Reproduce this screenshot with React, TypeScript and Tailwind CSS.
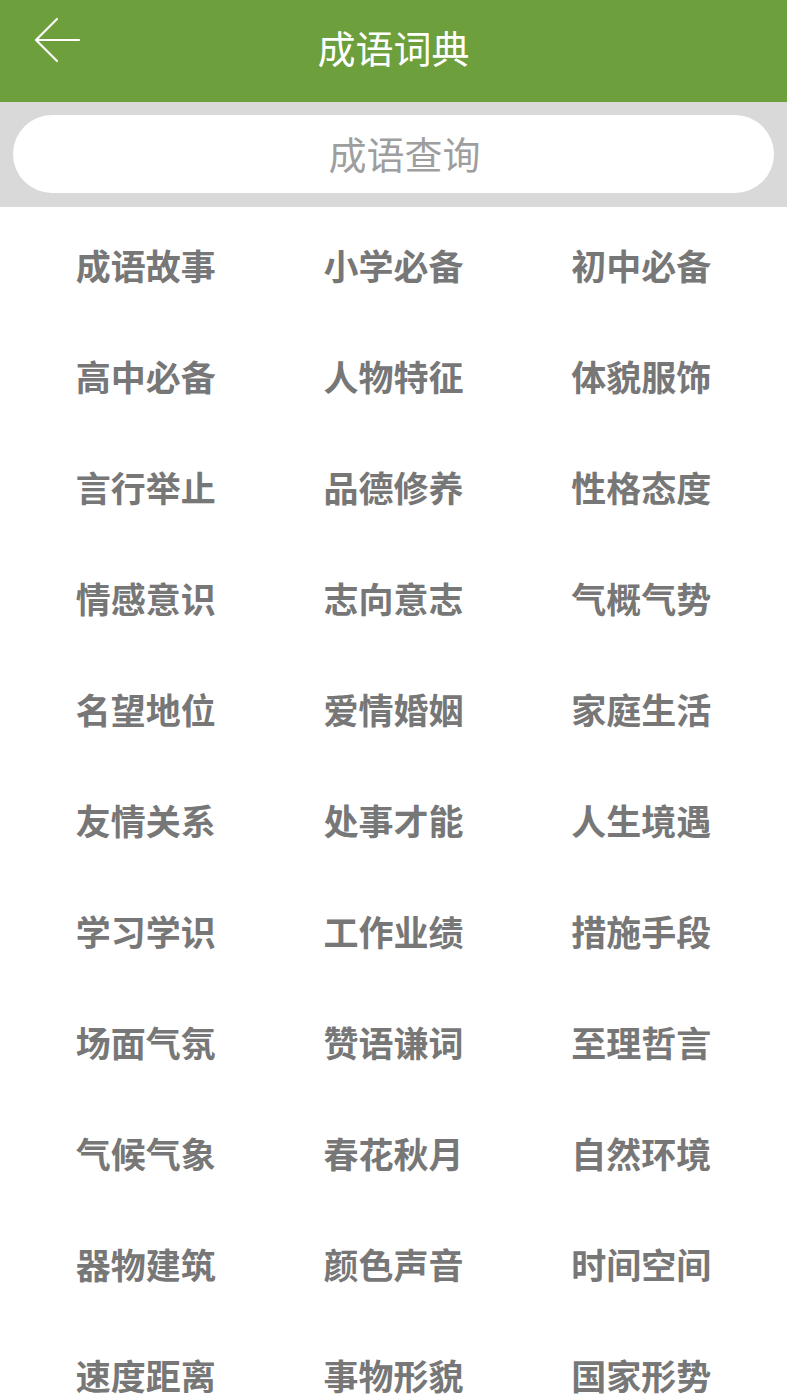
import React from "react";

const items = [
  "成语故事", "小学必备", "初中必备",
  "高中必备", "人物特征", "体貌服饰",
  "言行举止", "品德修养", "性格态度",
  "情感意识", "志向意志", "气概气势",
  "名望地位", "爱情婚姻", "家庭生活",
  "友情关系", "处事才能", "人生境遇",
  "学习学识", "工作业绩", "措施手段",
  "场面气氛", "赞语谦词", "至理哲言",
  "气候气象", "春花秋月", "自然环境",
  "器物建筑", "颜色声音", "时间空间",
  "速度距离", "事物形貌", "国家形势",
];

export default function App() {
  return (
    <div
      className="w-[787px] h-[1400px] overflow-hidden bg-white"
      style={{ fontFamily: '"Noto Sans CJK SC", "Noto Sans", sans-serif' }}
    >
      <header className="relative h-[102px] bg-[#6e9f3d] flex items-center justify-center">
        <svg
          className="absolute left-[33px] top-[16px]"
          width="48"
          height="48"
          viewBox="0 0 48 48"
          fill="none"
          stroke="white"
          strokeWidth="2.2"
          strokeLinecap="round"
          strokeLinejoin="round"
        >
          <path d="M3 24 H46" />
          <path d="M24 3 L3 24 L24 45" />
        </svg>
        <h1 className="text-white text-[38px] leading-none font-normal -mt-[8px]">成语词典</h1>
      </header>
      <div className="bg-[#d9d9d9] h-[105px] px-[13px] pt-[13px]">
        <div className="h-[78px] rounded-full bg-white flex items-center justify-center">
          <span className="text-[#9e9e9e] text-[38px] leading-none ml-[22px] -mt-[2px]">成语查询</span>
        </div>
      </div>
      <div className="grid grid-cols-3 px-[22px] pt-[2px]">
        {items.map((t) => (
          <div key={t} className="h-[111px] flex items-center justify-center">
            <span className="text-[#777777] text-[35px] font-bold leading-none">{t}</span>
          </div>
        ))}
      </div>
    </div>
  );
}
